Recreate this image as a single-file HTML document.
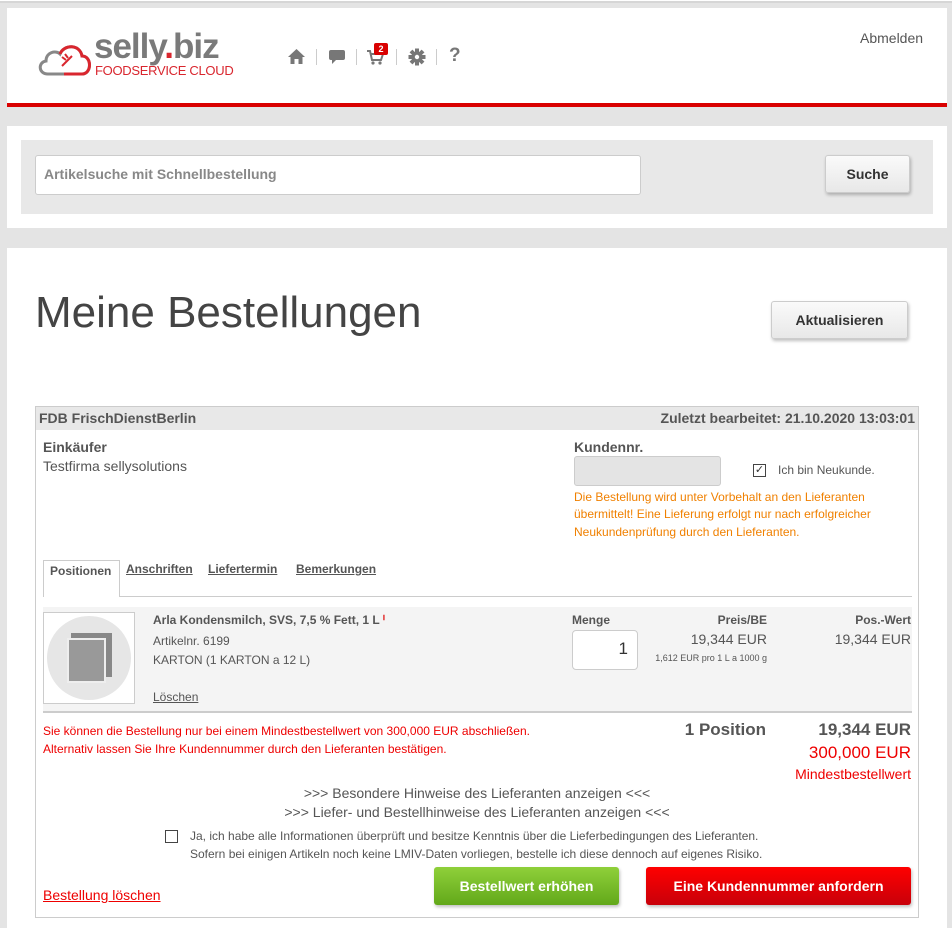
<!DOCTYPE html>
<html><head><meta charset="utf-8"><style>
*{box-sizing:border-box;margin:0;padding:0}
body{width:952px;height:924px;overflow:hidden;background:#e4e4e4;font-family:"Liberation Sans",sans-serif;color:#555;position:relative}
.a{position:absolute}
.btn{position:absolute;background:linear-gradient(#fafafa,#e8e8e8);border:1px solid #ccc;border-radius:3px;box-shadow:1px 2px 3px rgba(0,0,0,.25);font-weight:bold;font-size:14px;color:#333;text-align:center}
u{text-decoration:underline}
.sep{position:absolute;top:49px;width:1px;height:16px;background:#ccc}
</style></head><body>
<div class="a" style="left:0;top:0;width:952px;height:3px;background:#fff;border-bottom:2px solid #d6d6d6"></div>
<div class="a" style="left:7px;top:8px;width:940px;height:96px;background:#fff"></div>
<div class="a" style="left:7px;top:103px;width:940px;height:4px;background:#d90000"></div>
<svg class="a" style="left:36px;top:40px" width="60" height="38" viewBox="0 0 60 38"><path d="M12 34 C2 34 2 22 10 21 C10 12 20 10 24 14 C28 4 44 4 46 16 C56 16 56 34 46 34 Z" fill="none" stroke="#888" stroke-width="3"/><path d="M24 14 C28 4 44 4 46 16 C56 16 56 34 46 34 L28 34" fill="none" stroke="#d9262e" stroke-width="3"/><path d="M26 26 L36 16 M30 20 l-4-3 M32 18 l-3-4" stroke="#d9262e" stroke-width="2"/></svg>
<div class="a" style="left:94px;top:27px;font-size:35px;font-weight:bold;color:#7a7a7a;letter-spacing:-1px">selly<span style="color:#d9262e">.</span>biz</div>
<div class="a" style="left:95px;top:63px;font-size:13px;color:#d9262e;letter-spacing:-0.3px">FOODSERVICE CLOUD</div>
<svg class="a" style="left:287px;top:48px" width="19" height="17" viewBox="0 0 19 17"><path d="M1 9 L9.5 1 L18 9 L15.5 9 L15.5 16 L11.5 16 L11.5 11 L7.5 11 L7.5 16 L3.5 16 L3.5 9 Z" fill="#777"/></svg>
<div class="sep" style="left:316px"></div>
<svg class="a" style="left:328px;top:49px" width="18" height="16" viewBox="0 0 18 16"><path d="M3 1 H15 Q17 1 17 3 V9 Q17 11 15 11 H8 L4 15 V11 H3 Q1 11 1 9 V3 Q1 1 3 1Z" fill="#777"/></svg>
<div class="sep" style="left:356px"></div>
<svg class="a" style="left:366px;top:50px" width="18" height="15" viewBox="0 0 18 15"><path d="M1 1 H4 L6 10 H15 L17 4 H5" fill="none" stroke="#777" stroke-width="2"/><circle cx="7" cy="13" r="1.6" fill="#777"/><circle cx="14" cy="13" r="1.6" fill="#777"/></svg>
<div class="a" style="left:374px;top:43px;width:14px;height:12px;background:#d90000;color:#fff;font-size:9px;font-weight:bold;text-align:center;border-radius:2px;line-height:12px">2</div>
<div class="sep" style="left:396px"></div>
<svg class="a" style="left:408px;top:48px" width="18" height="18" viewBox="0 0 18 18"><g fill="#777"><circle cx="9" cy="9" r="5.5"/><rect x="7" y="0.5" width="4" height="17"/><rect x="0.5" y="7" width="17" height="4"/><rect x="7" y="0.5" width="4" height="17" transform="rotate(45 9 9)"/><rect x="7" y="0.5" width="4" height="17" transform="rotate(-45 9 9)"/></g><circle cx="9" cy="9" r="2.2" fill="#fff"/></svg>
<div class="sep" style="left:436px"></div>
<div class="a" style="left:449px;top:45px;font-size:19px;font-weight:bold;color:#777">?</div>
<div class="a" style="left:860px;top:30px;font-size:14px;color:#555">Abmelden</div>

<div class="a" style="left:7px;top:126px;width:940px;height:102px;background:#fff"></div>
<div class="a" style="left:21px;top:140px;width:912px;height:74px;background:#e8e8e8"></div>
<div class="a" style="left:35px;top:155px;width:606px;height:40px;background:#fff;border:1px solid #ccc;border-radius:3px;font-size:14px;font-weight:bold;color:#888;padding:10px 8px">Artikelsuche mit Schnellbestellung</div>
<div class="btn" style="left:825px;top:155px;width:85px;height:38px;line-height:36px">Suche</div>

<div class="a" style="left:7px;top:248px;width:940px;height:680px;background:#fff"></div>
<div class="a" style="left:35px;top:288px;font-size:44px;color:#444">Meine Bestellungen</div>
<div class="btn" style="left:771px;top:301px;width:137px;height:38px;line-height:36px">Aktualisieren</div>

<div class="a" style="left:35px;top:406px;width:884px;height:512px;border:1px solid #ccc"></div>
<div class="a" style="left:36px;top:407px;width:882px;height:23px;background:#e8e8e8;font-size:14px;font-weight:bold;color:#555;line-height:23px;padding:0 3px">FDB FrischDienstBerlin<span style="float:right">Zuletzt bearbeitet: 21.10.2020 13:03:01</span></div>
<div class="a" style="left:43px;top:439px;font-size:14px;font-weight:bold">Einkäufer</div>
<div class="a" style="left:43px;top:458px;font-size:14px">Testfirma sellysolutions</div>
<div class="a" style="left:574px;top:439px;font-size:14px;font-weight:bold">Kundennr.</div>
<div class="a" style="left:574px;top:456px;width:147px;height:30px;background:#e4e4e4;border:1px solid #ccc;border-radius:3px"></div>
<div class="a" style="left:753px;top:464px;width:13px;height:13px;border:1px solid #444;font-size:11px;line-height:11px;text-align:center;color:#333">✓</div>
<div class="a" style="left:778px;top:463px;font-size:12px">Ich bin Neukunde.</div>
<div class="a" style="left:574px;top:489px;font-size:12px;color:#f08000;line-height:17.3px;width:340px">Die Bestellung wird unter Vorbehalt an den Lieferanten übermittelt! Eine Lieferung erfolgt nur nach erfolgreicher Neukundenprüfung durch den Lieferanten.</div>

<div class="a" style="left:43px;top:596px;width:869px;height:1px;background:#ccc"></div>
<div class="a" style="left:43px;top:560px;width:77px;height:37px;background:#fff;border:1px solid #ccc;border-bottom:none;font-size:12px;font-weight:bold;padding:3px 6px">Positionen</div>
<div class="a" style="left:126px;top:562px;font-size:12px;font-weight:bold"><u>Anschriften</u></div>
<div class="a" style="left:208px;top:562px;font-size:12px;font-weight:bold"><u>Liefertermin</u></div>
<div class="a" style="left:296px;top:562px;font-size:12px;font-weight:bold"><u>Bemerkungen</u></div>

<div class="a" style="left:43px;top:607px;width:869px;height:104px;background:#f4f4f4"></div>
<div class="a" style="left:43px;top:711px;width:869px;height:2px;background:#ccc"></div>
<div class="a" style="left:43px;top:612px;width:92px;height:92px;background:#fff;border:1px solid #ccc"></div>
<div class="a" style="left:47px;top:616px;width:84px;height:84px;background:#e6e6e6;border-radius:50%"></div>
<div class="a" style="left:71px;top:633px;width:41px;height:44px;background:#888"></div>
<div class="a" style="left:67px;top:638px;width:39px;height:45px;background:#999;border:2px solid #eee"></div>
<div class="a" style="left:153px;top:613px;font-size:12px;font-weight:bold">Arla Kondensmilch, SVS, 7,5 % Fett, 1 L <span style="color:#d00">ⁱ</span></div>
<div class="a" style="left:153px;top:634px;font-size:12px">Artikelnr. 6199</div>
<div class="a" style="left:153px;top:653px;font-size:12px">KARTON (1 KARTON a 12 L)</div>
<div class="a" style="left:153px;top:690px;font-size:12px"><u>Löschen</u></div>
<div class="a" style="left:572px;top:613px;font-size:12px;font-weight:bold">Menge</div>
<div class="a" style="left:572px;top:630px;width:66px;height:40px;background:#fff;border:1px solid #ccc;border-radius:4px;font-size:17px;text-align:right;padding:8px 9px;color:#333">1</div>
<div class="a" style="left:650px;top:613px;width:117px;text-align:right;font-size:12px;font-weight:bold">Preis/BE</div>
<div class="a" style="left:650px;top:631px;width:117px;text-align:right;font-size:14px">19,344 EUR</div>
<div class="a" style="left:600px;top:653px;width:167px;text-align:right;font-size:9px">1,612 EUR pro 1 L a 1000 g</div>
<div class="a" style="left:790px;top:613px;width:121px;text-align:right;font-size:12px;font-weight:bold">Pos.-Wert</div>
<div class="a" style="left:790px;top:631px;width:121px;text-align:right;font-size:14px">19,344 EUR</div>

<div class="a" style="left:43px;top:723px;font-size:12px;color:#e00;line-height:17.5px">Sie können die Bestellung nur bei einem Mindestbestellwert von 300,000 EUR abschließen.<br>Alternativ lassen Sie Ihre Kundennummer durch den Lieferanten bestätigen.</div>
<div class="a" style="left:650px;top:720px;width:116px;text-align:right;font-size:17px;font-weight:bold">1 Position</div>
<div class="a" style="left:760px;top:720px;width:151px;text-align:right;font-size:17px;font-weight:bold">19,344 EUR</div>
<div class="a" style="left:760px;top:743px;width:151px;text-align:right;font-size:17px;color:#e00">300,000 EUR</div>
<div class="a" style="left:760px;top:766px;width:151px;text-align:right;font-size:14px;color:#e00">Mindestbestellwert</div>
<div class="a" style="left:35px;top:784px;width:884px;text-align:center;font-size:14px;line-height:19px">&gt;&gt;&gt; Besondere Hinweise des Lieferanten anzeigen &lt;&lt;&lt;<br>&gt;&gt;&gt; Liefer- und Bestellhinweise des Lieferanten anzeigen &lt;&lt;&lt;</div>
<div class="a" style="left:165px;top:830px;width:13px;height:13px;border:1px solid #444"></div>
<div class="a" style="left:190px;top:827px;font-size:12px;line-height:18px">Ja, ich habe alle Informationen überprüft und besitze Kenntnis über die Lieferbedingungen des Lieferanten.<br>Sofern bei einigen Artikeln noch keine LMIV-Daten vorliegen, bestelle ich diese dennoch auf eigenes Risiko.</div>
<div class="a" style="left:43px;top:887px;font-size:14px;color:#e00"><u>Bestellung löschen</u></div>
<div class="a" style="left:434px;top:867px;width:185px;height:38px;background:linear-gradient(#8fd03a,#62a81a);border-radius:3px;color:#fff;font-weight:bold;font-size:14px;text-align:center;line-height:38px;box-shadow:1px 2px 3px rgba(0,0,0,.25)">Bestellwert erhöhen</div>
<div class="a" style="left:646px;top:867px;width:265px;height:38px;background:linear-gradient(#f00,#c8000a);border-radius:3px;color:#fff;font-weight:bold;font-size:14px;text-align:center;line-height:38px;box-shadow:1px 2px 3px rgba(0,0,0,.25)">Eine Kundennummer anfordern</div>
</body></html>
